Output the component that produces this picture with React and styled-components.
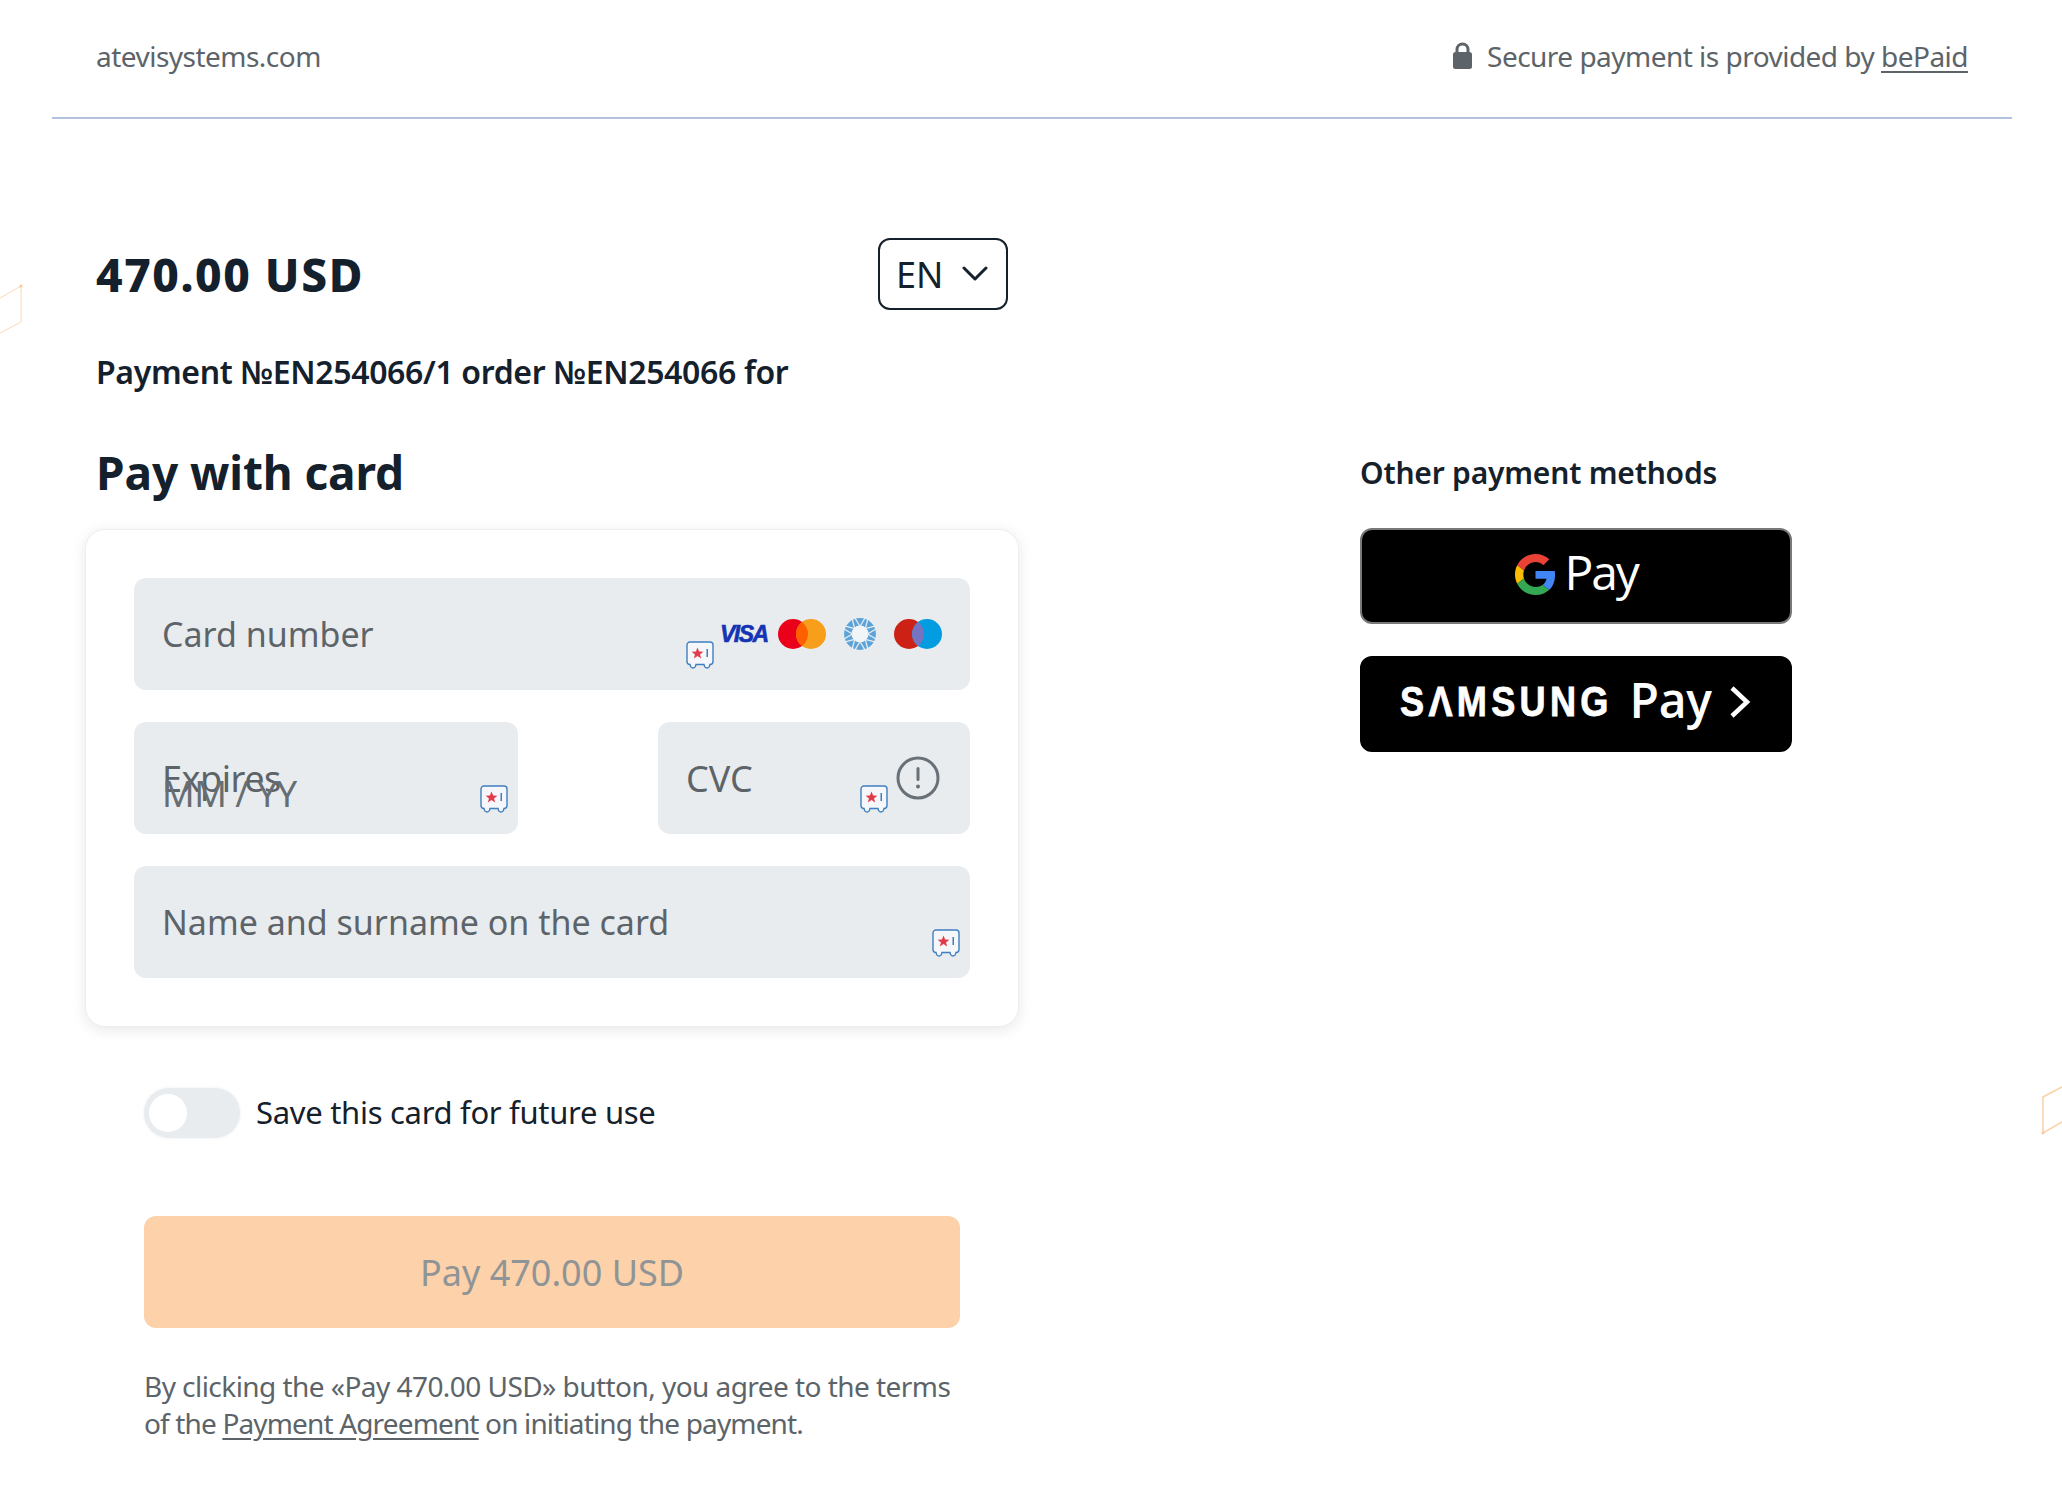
import React from 'react'
import styled, {createGlobalStyle} from 'styled-components'

const GlobalStyle = createGlobalStyle`
  html, body {
    margin: 0;
    padding: 0;
    background: #fff;
  }
  body {
    font-family: 'Noto Sans', sans-serif;
    color: #14202b;
  }
`

const Page = styled.div`
  position: relative;
  width: 2062px;
  height: 1498px;
  overflow: hidden;
  background: #fff;
`

const Corner = styled.svg`
  position: absolute;
  left: ${({$left}) => $left}px;
  top: ${({$top}) => $top}px;
`

const Header = styled.header`
  display: flex;
  justify-content: space-between;
  align-items: center;
  box-sizing: border-box;
  height: 119px;
  margin: 0 50px 0 52px;
  padding: 0 44px 6px;
  border-bottom: 2px solid #b4c2e0;
  font-size: 28px;
  letter-spacing: -0.52px;
  color: #5c6469;
`

const Secure = styled.div`
  display: flex;
  align-items: center;
  gap: 15px;
`

const Link = styled.a`
  color: inherit;
  text-decoration: underline;
  text-underline-offset: 4px;
`

const Main = styled.main`
  display: flex;
  align-items: flex-start;
  padding: 119px 0 0 96px;
`

const Left = styled.section`
  width: 912px;
`

const AmountRow = styled.div`
  display: flex;
  justify-content: space-between;
  align-items: center;
  height: 72px;
`

const Amount = styled.h1`
  margin: 0;
  font-size: 46px;
  font-weight: 800;
  letter-spacing: 1.550px;
  color: #14202b;
`

const LangSelect = styled.div`
  box-sizing: border-box;
  display: flex;
  align-items: center;
  justify-content: space-between;
  width: 130px;
  height: 72px;
  padding: 0 18px 0 16px;
  border: 2px solid #14202b;
  border-radius: 12px;
  font-size: 36px;
`

const PaymentNote = styled.p`
  margin: 40px 0 0;
  font-size: 32px;
  line-height: 44px;
  font-weight: 600;
  letter-spacing: -0.35px;
`

const CardTitle = styled.h2`
  margin: 48px 0 0;
  font-size: 46px;
  line-height: 60px;
  font-weight: 700;
  letter-spacing: -0.1px;
`

const CardPanel = styled.div`
  box-sizing: border-box;
  width: 934px;
  margin: 27px 0 0 -11px;
  padding: 48px;
  display: flex;
  flex-direction: column;
  gap: 32px;
  background: #fff;
  border: 1px solid #eceef0;
  border-radius: 20px;
  box-shadow: 0 3px 14px rgba(20, 32, 43, 0.1);
`

const SplitRow = styled.div`
  display: flex;
  justify-content: space-between;
`

const Field = styled.div`
  position: relative;
  box-sizing: border-box;
  display: flex;
  align-items: center;
  width: ${({$width}) => ($width ? `${$width}px` : '100%')};
  height: 112px;
  padding-left: 28px;
  background: #e9ecef;
  border-radius: 12px;
  font-size: ${({$size}) => $size || 36}px;
  letter-spacing: ${({$spacing}) => $spacing || 0}px;
  color: #5c6469;
`

const Ghost = styled.span`
  position: absolute;
  left: 28px;
  top: 47px;
  color: #666e73;
`

const SafeSlot = styled.span`
  position: absolute;
  display: flex;
  right: ${({$right}) => $right}px;
  bottom: ${({$bottom}) => $bottom}px;
`

const Brands = styled.div`
  position: absolute;
  right: 28px;
  top: 40px;
  display: flex;
  align-items: center;
`

const Visa = styled.span`
  width: 58px;
  font-family: 'Liberation Sans', sans-serif;
  font-size: 23px;
  font-weight: 700;
  font-style: italic;
  letter-spacing: -1.5px;
  color: #1434b4;
  -webkit-text-stroke: 0.6px #1434b4;
`

const BrandMark = styled.svg`
  display: block;
  margin-right: ${({$gap}) => $gap || 0}px;
`

const HintSlot = styled.span`
  position: absolute;
  right: 30px;
  top: 34px;
  display: flex;
`

const FormFooter = styled.div`
  padding: 0 48px;
`

const SaveRow = styled.div`
  display: flex;
  align-items: center;
  gap: 16px;
  margin-top: 61px;
  font-size: 31px;
  letter-spacing: -0.3px;
`

const Toggle = styled.span`
  display: flex;
  align-items: center;
  box-sizing: border-box;
  width: 96px;
  height: 50px;
  padding-left: 5px;
  background: #e9ecef;
  border-radius: 25px;
  box-shadow: 0 0 3px rgba(20, 32, 43, 0.08);
  &::before {
    content: '';
    width: 38px;
    height: 38px;
    border-radius: 50%;
    background: #fff;
  }
`

const SaveLabel = styled.span`
  margin-top: -2px;
`

const PayButton = styled.div`
  display: flex;
  align-items: center;
  justify-content: center;
  width: 816px;
  height: 112px;
  margin-top: 78px;
  background: #fdd1a9;
  border-radius: 12px;
  font-size: 36px;
  color: #8f9496;
`

const Terms = styled.p`
  width: 830px;
  margin: 40px 0 0;
  font-size: 28px;
  line-height: 37px;
  letter-spacing: -0.55px;
  color: #5c6469;
`

const TermsTail = styled.span`
  letter-spacing: -0.85px;
`

const Aside = styled.aside`
  width: 432px;
  margin: 213px 0 0 352px;
`

const AsideTitle = styled.h3`
  margin: 0;
  font-size: 30px;
  line-height: 44px;
  font-weight: 600;
  letter-spacing: -0.2px;
`

const WalletButton = styled.div`
  box-sizing: border-box;
  display: flex;
  align-items: center;
  justify-content: center;
  height: 96px;
  margin-top: ${({$top}) => $top}px;
  background: #000;
  border: 2px solid ${({$outlined}) => ($outlined ? '#77797b' : '#000')};
  border-radius: 12px;
  color: #fff;
`

const GoogleMark = styled.svg`
  margin-bottom: 4px;
`

const GPayText = styled.span`
  margin: 0 0 8px 9px;
  font-family: 'Open Sans', sans-serif;
  font-size: 48px;
  font-weight: 400;
  letter-spacing: -2.2px;
  line-height: 1;
`

const SamsungWord = styled.span`
  display: inline-block;
  margin: 0 -34px 4px 0;
  font-family: 'Liberation Sans', sans-serif;
  font-size: 42px;
  font-weight: 700;
  letter-spacing: 5px;
  transform: scaleX(0.86);
  transform-origin: left center;
  -webkit-text-stroke: 0.8px #fff;
`

const SamsungPay = styled.span`
  margin: 0 0 8px 16px;
  font-family: 'Open Sans', sans-serif;
  font-size: 48px;
  font-weight: 600;
  letter-spacing: -0.3px;
  line-height: 1;
`

const ArrowMark = styled.svg`
  margin: 0 0 4px 16px;
`

const LockIcon = () => (
  <svg width="19" height="27" viewBox="0 0 19 27">
    <path
      d="M4 12V7.500a5.500 5.500 0 0 1 11 0V12"
      fill="none"
      stroke="#5c6469"
      strokeWidth="3"
    />
    <rect x="0" y="10" width="19" height="17" rx="2.500" fill="#5c6469" />
  </svg>
)

const Chevron = () => (
  <svg width="26" height="16" viewBox="0 0 26 16">
    <path
      d="M2 2l11 11L24 2"
      fill="none"
      stroke="#14202b"
      strokeWidth="3"
      strokeLinecap="round"
      strokeLinejoin="round"
    />
  </svg>
)

const SafeIcon = () => (
  <svg width="28" height="28" viewBox="0 0 28 28">
    <path
      d="M4 1H24A3 3 0 0 1 27 4V20.500A3 3 0 0 1 24 23.500Q23.500 27 21 27Q18.500 27 18 23.500H10Q9.500 27 7 27Q4.500 27 4 23.500A3 3 0 0 1 1 20.500V4A3 3 0 0 1 4 1Z"
      fill="#f5f7fa"
      stroke="#3f7fc0"
      strokeWidth="1.400"
    />
    <path
      d="M11.500 6.500l1.600 4 4.300.2-3.400 2.700 1.200 4.100-3.700-2.400-3.700 2.400 1.200-4.100-3.400-2.700 4.300-.2z"
      fill="#e23b4a"
    />
    <rect x="20.500" y="8" width="1.500" height="8" fill="#3f7fc0" />
  </svg>
)

const MasterCard = () => (
  <BrandMark $gap={18} width="48" height="30" viewBox="0 0 48 30">
    <circle cx="15" cy="15" r="15" fill="#eb001b" />
    <circle cx="33" cy="15" r="15" fill="#f79e1b" />
    <path d="M24 3a15 15 0 0 1 0 24a15 15 0 0 1 0-24z" fill="#ff5f00" />
  </BrandMark>
)

const Maestro = () => (
  <BrandMark width="48" height="30" viewBox="0 0 48 30">
    <circle cx="15" cy="15" r="15" fill="#cc2114" />
    <circle cx="33" cy="15" r="15" fill="#049ce0" />
    <path d="M24 3a15 15 0 0 1 0 24a15 15 0 0 1 0-24z" fill="#7673c0" />
  </BrandMark>
)

const ringAngles = [0, 45, 90, 135, 180, 225, 270, 315]

// blue ring, cut into segments by slanted lines
const RingMark = () => (
  <BrandMark $gap={18} width="32" height="32" viewBox="0 0 32 32">
    <circle cx="16" cy="16" r="12.200" fill="#f2f5f8" stroke="#5ba3d9" strokeWidth="7.400" />
    {ringAngles.map(angle => (
      <path
        key={angle}
        d="M16 8.500L21 0"
        stroke="#e9ecef"
        strokeWidth="1.300"
        transform={`rotate(${angle} 16 16)`}
      />
    ))}
    {ringAngles.map(angle => (
      <path
        key={angle}
        d="M16 8.500L11 0"
        stroke="#e9ecef"
        strokeWidth="1.300"
        transform={`rotate(${angle} 16 16)`}
      />
    ))}
  </BrandMark>
)

const HintIcon = () => (
  <svg width="44" height="44" viewBox="0 0 44 44">
    <circle cx="22" cy="22" r="20" fill="none" stroke="#687178" strokeWidth="3" />
    <rect x="20.500" y="11" width="3" height="14" rx="1.500" fill="#687178" />
    <circle cx="22" cy="30.500" r="2" fill="#687178" />
  </svg>
)

const GoogleG = () => (
  <GoogleMark width="41" height="41" viewBox="0 0 48 48">
    <path
      fill="#ea4335"
      d="M24 9.500c3.500 0 6.700 1.200 9.200 3.600l6.900-6.900C35.900 2.400 30.500 0 24 0 14.600 0 6.500 5.400 2.600 13.200l8 6.200C12.500 13.700 17.800 9.500 24 9.500z"
    />
    <path
      fill="#4285f4"
      d="M46.900 24.500c0-1.600-.1-3.100-.4-4.500H24v9h12.900c-.6 3-2.200 5.500-4.700 7.200l7.700 6c4.500-4.200 7-10.300 7-17.700z"
    />
    <path
      fill="#fbbc05"
      d="M10.500 28.600c-.5-1.400-.8-3-.8-4.600s.3-3.200.8-4.600l-8-6.200C.9 16.500 0 20.100 0 24s.9 7.500 2.600 10.800l7.900-6.200z"
    />
    <path
      fill="#34a853"
      d="M24 48c6.500 0 11.900-2.100 15.900-5.800l-7.700-6c-2.200 1.500-4.900 2.300-8.200 2.300-6.200 0-11.500-4.200-13.400-9.900l-8 6.200C6.500 42.600 14.600 48 24 48z"
    />
  </GoogleMark>
)

const SamsungArrow = () => (
  <ArrowMark width="24" height="36" viewBox="0 0 24 36">
    <path d="M4 4l15 14L4 32" fill="none" stroke="#fff" strokeWidth="4.500" />
  </ArrowMark>
)

const App = () => (
  <>
    <GlobalStyle />
    <Page>
      <Corner $left={0} $top={280} width="26" height="58" viewBox="0 0 26 58">
        <path d="M0 18L21 6V42L0 53" fill="none" stroke="#fbd9b6" strokeWidth="1" />
        <circle cx="21" cy="6" r="1.500" fill="#fbc99c" />
      </Corner>
      <Corner $left={2038} $top={1082} width="24" height="58" viewBox="0 0 24 58">
        <path d="M24 5L5 15V51L24 40" fill="none" stroke="#fbd0a6" strokeWidth="1.500" />
        <circle cx="5" cy="51" r="1.500" fill="#fbc99c" />
      </Corner>

      <Header>
        <span>atevisystems.com</span>
        <Secure>
          <LockIcon />
          <span>
            Secure payment is provided by <Link href="#">bePaid</Link>
          </span>
        </Secure>
      </Header>

      <Main>
        <Left>
          <AmountRow>
            <Amount>470.00 USD</Amount>
            <LangSelect>
              EN
              <Chevron />
            </LangSelect>
          </AmountRow>
          <PaymentNote>Payment №EN254066/1 order №EN254066 for</PaymentNote>
          <CardTitle>Pay with card</CardTitle>

          <CardPanel>
            <Field $size={34}>
              Card number
              <Brands>
                <Visa>VISA</Visa>
                <MasterCard />
                <RingMark />
                <Maestro />
              </Brands>
              <SafeSlot $right={256} $bottom={21}>
                <SafeIcon />
              </SafeSlot>
            </Field>
            <SplitRow>
              <Field $width={384} $spacing={-0.5}>
                Expires
                <Ghost>MM / YY</Ghost>
                <SafeSlot $right={10} $bottom={21}>
                  <SafeIcon />
                </SafeSlot>
              </Field>
              <Field $width={312}>
                CVC
                <HintSlot>
                  <HintIcon />
                </HintSlot>
                <SafeSlot $right={82} $bottom={21}>
                  <SafeIcon />
                </SafeSlot>
              </Field>
            </SplitRow>
            <Field $size={34}>
              Name and surname on the card
              <SafeSlot $right={10} $bottom={21}>
                <SafeIcon />
              </SafeSlot>
            </Field>
          </CardPanel>

          <FormFooter>
            <SaveRow>
              <Toggle />
              <SaveLabel>Save this card for future use</SaveLabel>
            </SaveRow>
            <PayButton>Pay 470.00 USD</PayButton>
            <Terms>
              By clicking the «Pay 470.00 USD» button, you agree to the terms{' '}
              <TermsTail>
                of the <Link href="#">Payment Agreement</Link> on initiating the payment.
              </TermsTail>
            </Terms>
          </FormFooter>
        </Left>

        <Aside>
          <AsideTitle>Other payment methods</AsideTitle>
          <WalletButton $top={33} $outlined>
            <GoogleG />
            <GPayText>Pay</GPayText>
          </WalletButton>
          <WalletButton $top={32}>
            <SamsungWord>SΛMSUNG</SamsungWord>
            <SamsungPay>Pay</SamsungPay>
            <SamsungArrow />
          </WalletButton>
        </Aside>
      </Main>
    </Page>
  </>
)

export default App
